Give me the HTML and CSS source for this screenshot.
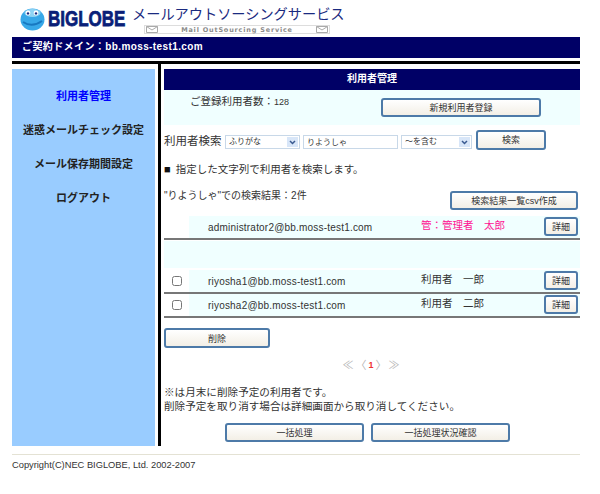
FILE: index.html
```html
<!DOCTYPE html>
<html lang="ja">
<head>
    <meta charset="UTF-8">
    <title>利用者管理</title>
    <link rel="stylesheet" href="styles.css">
</head>
<body>
    <div class="page">
        <!-- header -->
        <div class="header">
            <svg class="logo-ball" width="25" height="23" viewBox="0 0 25 23">
                <ellipse cx="12.5" cy="11.5" rx="12" ry="11" fill="#38a8e8"/>
                <ellipse cx="12.5" cy="5" rx="8" ry="4" fill="#8fd4f4"/>
                <circle cx="8" cy="5" r="2.4" fill="#fff"/>
                <circle cx="16" cy="5" r="2.4" fill="#fff"/>
                <circle cx="8" cy="5.4" r="1.2" fill="#1a2a80"/>
                <circle cx="16" cy="5.4" r="1.2" fill="#1a2a80"/>
                <path d="M3 14 Q12 20 22 13" fill="none" stroke="#1878c0" stroke-width="2"/>
            </svg>
            <span class="logo-text">BIGLOBE</span>
            <div class="service">
                <div class="service-jp">メールアウトソーシングサービス</div>
                <div class="service-en">
                    <svg width="12" height="7" viewBox="0 0 12 7"><path d="M.5.5h11v6H.5zM.5.5l5.500 3.500 5.500-3.500" fill="none" stroke="#aaa"/></svg>
                    <span>Mail OutSourcing Service</span>
                    <svg width="12" height="7" viewBox="0 0 12 7"><path d="M.5.5h11v6H.5zM.5.5l5.500 3.500 5.500-3.500" fill="none" stroke="#aaa"/></svg>
                </div>
            </div>
        </div>
        <div class="domain-bar">ご契約ドメイン：bb.moss-test1.com</div>
        <div class="black-rule"></div>

        <div class="columns">
            <!-- side menu -->
            <div class="sidebar">
                <a class="menu-item current">利用者管理</a>
                <a class="menu-item">迷惑メールチェック設定</a>
                <a class="menu-item">メール保存期間設定</a>
                <a class="menu-item">ログアウト</a>
            </div>
            <div class="divider"></div>

            <div class="main">
                <h1 class="main-title">利用者管理</h1>

                <div class="summary">
                    <span class="summary-count">ご登録利用者数：<small>128</small></span>
                    <button class="btn btn-new">新規利用者登録</button>
                </div>

                <div class="search">
                    <span class="search-label">利用者検索</span>
                    <select class="field field-kana"><option>ふりがな</option></select>
                    <input class="field field-word" type="text" value="りようしゃ">
                    <select class="field field-match"><option>～を含む</option></select>
                    <button class="btn btn-search">検索</button>
                </div>

                <p class="notice"><span class="notice-mark">■</span>指定した文字列で利用者を検索します。</p>

                <div class="result-head">
                    <span class="result-text">"りようしゃ"での検索結果：2件</span>
                    <button class="btn btn-csv">検索結果一覧csv作成</button>
                </div>

                <div class="user-row admin">
                    <span class="cell-check"></span>
                    <span class="cell-mail">administrator2@bb.moss-test1.com</span>
                    <span class="cell-name">管：管理者　太郎</span>
                    <button class="btn btn-detail">詳細</button>
                </div>
                <div class="spacer-row"></div>
                <div class="user-row">
                    <span class="cell-check"><input type="checkbox"></span>
                    <span class="cell-mail">riyosha1@bb.moss-test1.com</span>
                    <span class="cell-name">利用者　一郎</span>
                    <button class="btn btn-detail">詳細</button>
                </div>
                <div class="user-row">
                    <span class="cell-check"><input type="checkbox"></span>
                    <span class="cell-mail">riyosha2@bb.moss-test1.com</span>
                    <span class="cell-name">利用者　二郎</span>
                    <button class="btn btn-detail">詳細</button>
                </div>

                <button class="btn btn-delete">削除</button>

                <div class="pager">
                    <span>≪</span>
                    <span>〈</span>
                    <b>1</b>
                    <span>〉</span>
                    <span>≫</span>
                </div>

                <p class="note">※は月末に削除予定の利用者です。<br>削除予定を取り消す場合は詳細画面から取り消してください。</p>

                <div class="bulk">
                    <button class="btn btn-bulk">一括処理</button>
                    <button class="btn btn-bulk">一括処理状況確認</button>
                </div>
            </div>
        </div>

        <div class="footer">Copyright(C)NEC BIGLOBE, Ltd. 2002-2007</div>
    </div>
</body>
</html>
```

FILE: styles.css
```css
* {
    box-sizing: border-box;
}

body {
    margin: 0;
    background-color: #ffffff;
    color: #333333;
    font-family: "Liberation Sans", "Noto Sans CJK JP", sans-serif;
    font-size: 10px;
}

.page {
    width: 568px;
    margin-left: 12px;
}

.header {
    height: 37px;
    display: flex;
    align-items: flex-start;
    padding: 8px 0 0 8px;
}

.logo-ball {
    flex: none;
}

.logo-text {
    width: 83px;
    margin: 2px 0 0 3px;
    color: #0a1f78;
    font-size: 17px;
    font-weight: bold;
    line-height: 20px;
    -webkit-text-stroke: 0.6px #0a1f78;
    transform: scaleY(1.25);
    transform-origin: left center;
}

.service {
    margin: -4px 0 0 1px;
}

.service-jp {
    color: #1a2a80;
    font-size: 14.2px;
    line-height: 20px;
    white-space: nowrap;
}

.service-en {
    width: 186px;
    height: 9px;
    display: flex;
    justify-content: space-between;
    align-items: center;
    margin: 1px 0 0 12px;
    padding: 0 1px;
    border: 1px solid #dddddd;
    color: #8a8a8a;
    font-family: "DejaVu Sans", sans-serif;
    font-size: 6.5px;
    font-weight: bold;
    letter-spacing: 0.8px;
    white-space: nowrap;
}

.domain-bar {
    height: 21px;
    padding-left: 10px;
    background-color: #000066;
    color: #ffffff;
    font-size: 10px;
    font-weight: bold;
    letter-spacing: 0.4px;
    line-height: 20px;
}

.black-rule {
    height: 3px;
    margin-top: 3px;
    background-color: #000000;
}

.columns {
    display: flex;
    height: 382px;
}

.sidebar {
    width: 143px;
    margin-top: 5px;
    padding-top: 17px;
    background-color: #99ccff;
}

.menu-item {
    display: block;
    height: 34px;
    color: #222222;
    font-size: 11px;
    font-weight: bold;
    line-height: 20px;
    text-align: center;
}

.menu-item.current {
    color: #0000ff;
}

.divider {
    width: 3px;
    margin-left: 3px;
    background-color: #000000;
}

.main {
    width: 416px;
    margin-left: 3px;
    padding-top: 5px;
}

.main-title {
    height: 21px;
    margin: 0;
    background-color: #000066;
    color: #ffffff;
    font-size: 10px;
    line-height: 19px;
    text-align: center;
}

.btn {
    height: 19px;
    padding: 0;
    border: 2px solid #4d7aa8;
    border-radius: 3px;
    background: linear-gradient(#ffffff, #f3efe6);
    color: #333333;
    font-family: inherit;
    font-size: 9px;
}

.summary {
    height: 35px;
    display: flex;
    align-items: flex-start;
    padding: 8px 0 0 26px;
    background-color: #f0ffff;
}

.summary-count {
    width: 191px;
    margin-top: -3px;
    font-size: 10.5px;
    line-height: 12px;
}

.summary-count small {
    font-size: 9px;
}

.btn-new {
    width: 160px;
}

.search {
    height: 31px;
    display: flex;
    align-items: center;
    padding-bottom: 2px;
}

.search-label {
    width: 61px;
    margin-top: 1px;
    font-size: 11.5px;
    white-space: nowrap;
}

.field {
    height: 14px;
    margin-top: 4px;
    padding: 0 1px 0 3px;
    border: 1px solid #c8d8e8;
    background-color: #ffffff;
    color: #333333;
    font-family: inherit;
    font-size: 8px;
}

select.field {
    appearance: none;
    background: #ffffff url("data:image/svg+xml,%3Csvg xmlns='http://www.w3.org/2000/svg' width='11' height='10'%3E%3Crect width='11' height='10' fill='%23d8e6f8'/%3E%3Cpath d='M3 4l2.500 2.500L8 4' fill='none' stroke='%233a5a90' stroke-width='1.500'/%3E%3C/svg%3E") no-repeat right 1px center;
}

.field-kana {
    width: 75px;
}

.field-word {
    width: 95px;
    margin-left: 3px;
}

.field-match {
    width: 71px;
    margin-left: 3px;
}

.btn-search {
    width: 70px;
    height: 20px;
    margin-left: 4px;
}

.notice {
    height: 31px;
    margin: 0;
    padding-top: 6px;
    font-size: 10.5px;
    line-height: 14px;
}

.notice-mark {
    margin-right: 5px;
    color: #111111;
    font-size: 11px;
}

.result-head {
    height: 29px;
    display: flex;
    justify-content: space-between;
    align-items: flex-start;
}

.result-text {
    padding-top: 2px;
    font-size: 10px;
    line-height: 14px;
}

.btn-csv {
    width: 128px;
    margin: 4px 2px 0 0;
}

.user-row {
    height: 24px;
    display: flex;
    align-items: center;
    border-bottom: 2px solid #777777;
    background: linear-gradient(to right, #ffffff 25px, #f0ffff 25px);
}

.user-row.admin .cell-name {
    color: #ff1493;
}

.cell-check {
    width: 44px;
    padding-left: 8px;
}

.cell-check input {
    display: block;
    width: 10px;
    height: 10px;
    margin: 0;
}

.cell-mail {
    width: 213px;
    font-size: 10px;
    letter-spacing: 0.2px;
}

.cell-name {
    width: 123px;
    padding-bottom: 5px;
    font-size: 10.5px;
}

.btn-detail {
    width: 34px;
    height: 19px;
    margin-top: -2px;
}

.spacer-row {
    height: 27px;
    margin: 1px 0 2px;
    background-color: #f0ffff;
}

.btn-delete {
    display: block;
    width: 106px;
    height: 20px;
    margin-top: 10px;
}

.pager {
    display: flex;
    justify-content: center;
    gap: 2px;
    margin-top: 10px;
    padding-right: 2px;
    color: #b5b5b5;
    font-size: 11px;
    line-height: 14px;
}

.pager b {
    color: #ee3333;
    font-size: 9px;
}

.note {
    margin: 13px 0 0;
    font-size: 10.6px;
    line-height: 14px;
    white-space: nowrap;
}

.bulk {
    display: flex;
    gap: 7px;
    margin-top: 10px;
    padding-left: 61px;
}

.btn-bulk {
    width: 139px;
}

.footer {
    height: 24px;
    margin-top: 8px;
    border-top: 1px solid #e4e2d4;
    font-size: 9.3px;
    line-height: 21px;
}
```
